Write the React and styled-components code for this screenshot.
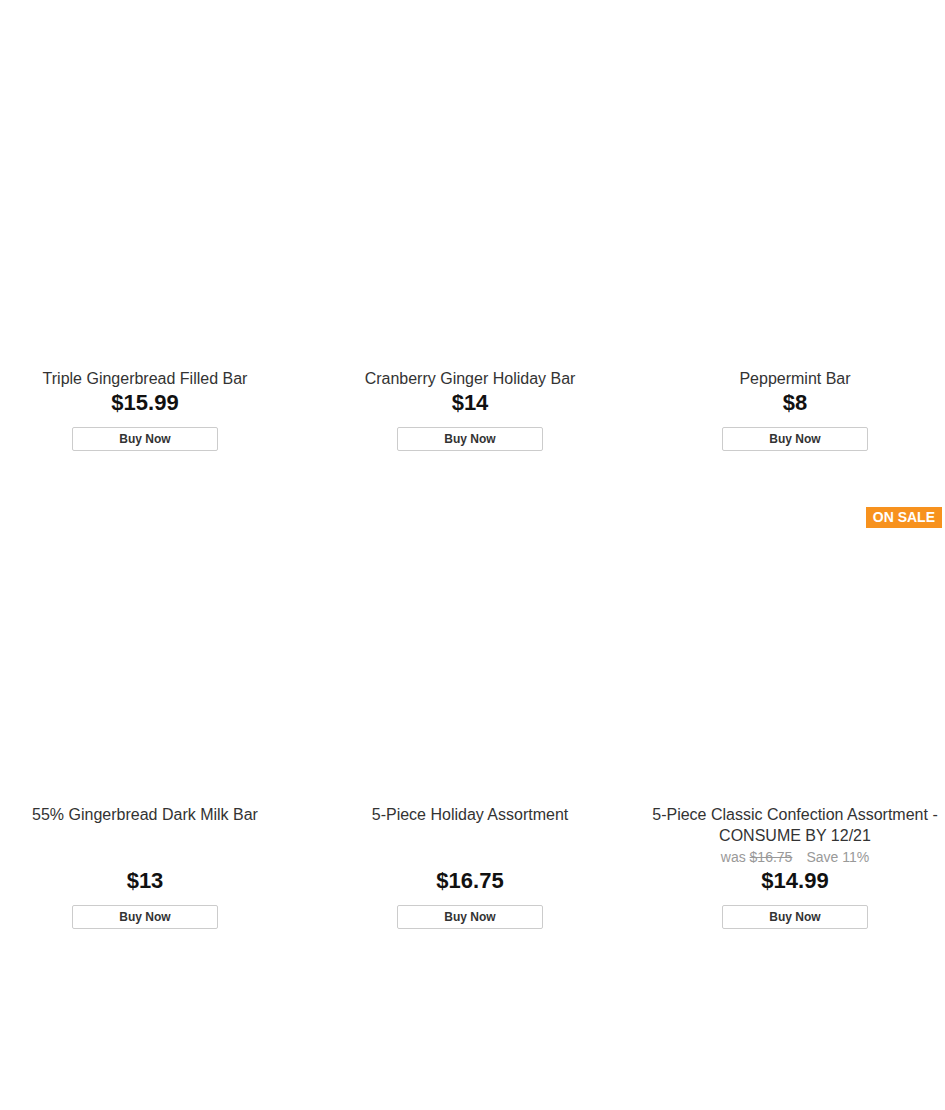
import React from 'react'
import styled, { createGlobalStyle } from 'styled-components'

const GlobalStyle = createGlobalStyle`
  html, body {
    margin: 0;
    padding: 0;
    background: #fff;
    font-family: "Liberation Sans", Arial, sans-serif;
  }
`

const Grid = styled.div`
  display: grid;
  grid-template-columns: repeat(3, 290px);
  column-gap: 35px;
  row-gap: 56px;
  padding-top: 71px;
`

const Card = styled.div`
  display: flex;
  flex-direction: column;
  align-items: center;
  text-align: center;
`

const ImageBox = styled.div`
  position: relative;
  width: 100%;
  height: 290px;
  background: #fff;
`

const Badge = styled.span`
  position: absolute;
  top: 0;
  right: -2px;
  height: 21px;
  line-height: 21px;
  padding: 0 7px;
  background: #f7921e;
  color: #fff;
  font-size: 14px;
  font-weight: bold;
`

const Title = styled.div`
  margin-top: 7px;
  font-size: 16px;
  line-height: 21px;
  color: #333;
`

const Bottom = styled.div`
  margin-top: auto;
  display: flex;
  flex-direction: column;
  align-items: center;
`

const WasLine = styled.div`
  margin-top: 1px;
  font-size: 14px;
  line-height: 20px;
  color: #999;
  display: flex;
  gap: 14px;
`

const Strike = styled.s`
  text-decoration: line-through;
`

const Price = styled.div`
  font-size: 22px;
  line-height: 28px;
  font-weight: bold;
  color: #111;
`

const BuyButton = styled.button`
  margin-top: 10px;
  width: 146px;
  height: 24px;
  padding: 0;
  background: #fff;
  border: 1px solid #ccc;
  border-radius: 2px;
  font-family: "Liberation Sans", Arial, sans-serif;
  font-size: 12px;
  font-weight: bold;
  color: #333;
  cursor: pointer;
`

const products = [
  { name: 'Triple Gingerbread Filled Bar', price: '$15.99' },
  { name: 'Cranberry Ginger Holiday Bar', price: '$14' },
  { name: 'Peppermint Bar', price: '$8' },
  { name: '55% Gingerbread Dark Milk Bar', price: '$13' },
  { name: '5-Piece Holiday Assortment', price: '$16.75' },
  {
    name: '5-Piece Classic Confection Assortment - CONSUME BY 12/21',
    price: '$14.99',
    was: '$16.75',
    save: '11%',
  },
]

export default function App() {
  return (
    <>
      <GlobalStyle />
      <Grid>
        {products.map((p) => (
          <Card key={p.name}>
            <ImageBox>{p.was && <Badge>ON SALE</Badge>}</ImageBox>
            <Title>{p.name}</Title>
            <Bottom>
              {p.was && (
                <WasLine>
                  <span>
                    was <Strike>{p.was}</Strike>
                  </span>
                  <span>Save {p.save}</span>
                </WasLine>
              )}
              <Price>{p.price}</Price>
              <BuyButton>Buy Now</BuyButton>
            </Bottom>
          </Card>
        ))}
      </Grid>
    </>
  )
}
